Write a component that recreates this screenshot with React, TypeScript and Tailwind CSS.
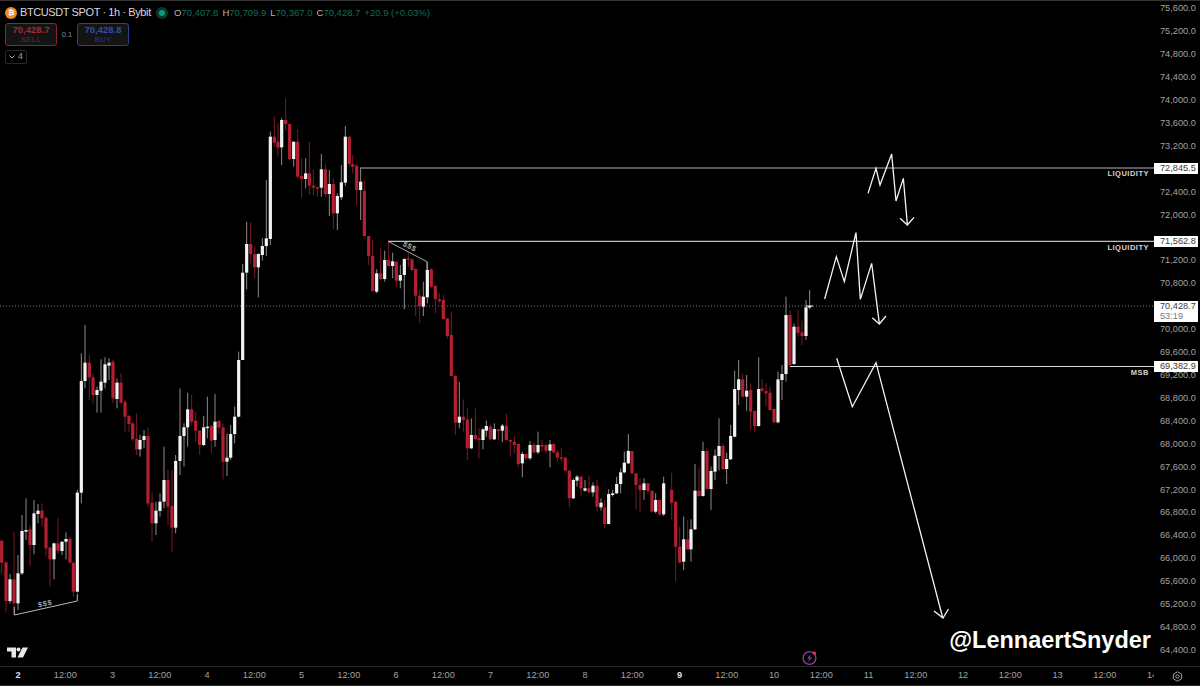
import React from "react";

type C = [number, number, number, number, number, number];

// [zoomX, wickTop, bodyTop, bodyBottom, wickBottom, isWhite]
const a: C[] = [
[5,660,662,728,760,0],[18,725,727,843,878,0],[30,762,778,843,850,1],[42,635,778,850,885,0],[54,705,760,850,870,1],[66,585,633,760,765,1],[78,535,630,635,660,1],[90,615,628,675,738,0],[102,540,580,675,703,1],[114,552,572,582,610,1],[126,550,572,595,620,0],[138,590,593,685,710,0],[150,680,683,718,798,0],[162,668,670,718,778,1],[174,595,670,692,700,0],[186,665,665,693,705,1],[198,637,657,665,718,1],[210,650,657,728,730,0],[220,725,728,815,830,0],[232,510,518,815,818,1],[244,100,183,518,550,1],[255,15,128,183,205,1],[268,105,128,172,240,0],[279,160,172,225,250,0],[291,200,210,225,278,1],[303,118,185,212,278,1],[315,112,133,188,205,1],[327,115,128,137,180,1],[339,120,125,235,250,0],[351,175,188,237,265,1],[363,160,188,248,250,0],[375,240,246,290,335,0],[387,285,288,312,335,0],[398,305,310,358,365,0],[410,280,356,388,405,0],[420,345,360,388,410,1],[432,330,348,360,385,1],[444,322,348,550,560,0],[456,518,548,610,665,0],[468,545,572,610,645,1],[480,520,545,573,590,1],[492,380,480,545,565,1],[504,450,480,560,615,0],[516,450,558,623,695,0],[527,405,423,623,640,1],[540,205,348,423,465,1],[552,310,322,348,440,1],[563,218,268,322,380,1],[575,225,268,305,315,0],[587,275,302,332,365,0],[599,330,332,375,405,0],[611,288,322,375,378,1],[622,230,320,324,355,1],[634,315,318,362,400,0],[645,222,305,360,380,1],[657,300,303,323,340,0],[669,310,322,425,478,0],[681,340,413,425,468,1],[692,315,342,413,420,1],[704,260,290,342,370,1],[716,95,120,290,292,1],
];
const b: C[] = [
[38,522,548,810,810,1],[50,395,462,548,598,1],[62,398,462,492,520,0],[74,470,492,532,565,0],[85,490,492,532,622,1],[97,445,468,495,512,1],[109,270,445,468,498,1],[121,125,140,447,465,1],[133,80,140,158,170,0],[144,100,155,173,200,0],[155,85,90,172,225,1],[167,25,90,102,120,0],[179,100,102,207,210,0],[191,155,155,207,230,1],[203,118,155,260,265,0],[215,205,258,267,322,0],[227,205,250,267,295,1],[238,155,250,287,315,0],[250,238,287,293,315,0],[262,290,292,294,320,0],[274,192,238,293,320,1],[286,222,238,312,320,0],[298,240,282,312,378,1],[310,265,282,370,418,0],[322,310,318,370,420,1],[334,225,277,322,330,1],[346,108,140,278,288,1],[358,140,140,222,230,0],[368,195,222,230,250,0],[380,222,228,300,345,0],[392,235,275,300,390,1],[403,270,302,438,440,0],[416,438,438,498,525,0],[428,450,498,603,605,0],[440,538,550,605,610,1],[452,475,550,567,570,0],[464,482,510,567,575,1],[476,455,510,528,530,0],[488,488,514,528,565,1],[499,515,515,572,590,0],[511,525,555,572,595,1],[523,505,507,555,658,1],[535,490,505,508,530,0],[546,505,508,540,545,0],[557,535,537,617,678,0],[569,600,617,648,700,0],[580,575,620,650,678,1],[592,515,540,622,640,1],[604,535,538,590,595,0],[616,585,588,627,670,0],[628,610,628,633,640,0],[640,615,630,687,690,0],[652,685,685,738,745,0],
];
const c: C[] = [
[64,95,165,288,290,0],[76,285,288,428,465,0],[88,305,410,428,445,1],[100,358,410,420,455,0],[112,385,418,505,540,0],[124,415,465,505,507,1],[136,385,465,477,480,0],[147,445,475,480,535,0],[159,445,448,480,508,1],[169,422,438,452,470,1],[181,435,440,478,480,0],[193,430,447,478,480,1],[205,447,448,453,480,0],[217,432,437,452,487,1],[229,402,437,480,482,0],[241,478,480,485,530,0],[253,468,485,495,520,0],[265,490,492,552,560,0],[277,515,522,550,592,1],[288,520,522,535,540,0],[300,483,495,535,540,1],[312,490,495,517,520,0],[324,455,495,517,522,1],[336,480,495,500,515,0],[348,490,495,512,520,0],[360,480,493,512,562,1],[371,490,492,517,520,0],[382,510,517,533,545,0],[394,505,532,534,545,0],[406,530,533,572,575,0],[418,570,572,655,682,0],[430,595,600,655,657,1],[441,585,590,602,620,1],[453,588,590,625,650,0],[465,600,625,632,635,1],[477,588,625,637,640,0],[489,607,617,637,650,1],[501,600,617,680,695,0],[513,655,668,682,692,1],[524,660,682,732,745,0],[536,628,642,732,733,1],[548,630,640,645,650,1],[560,590,612,640,642,1],[572,565,577,612,640,1],[583,515,548,577,580,1],[595,462,513,550,552,1],[606,513,513,580,582,0],[618,580,580,615,690,0],[630,595,615,630,698,0],[642,595,610,630,660,1],[654,610,610,633,640,0],[666,630,633,695,697,0],[677,640,660,695,700,1],[689,660,660,703,708,0],[701,590,610,703,708,1],
];
const d: C[] = [
[35,578,630,668,718,0],[47,665,665,800,905,0],[59,740,800,848,850,0],[71,710,778,845,870,1],[83,720,778,808,810,0],[93,718,748,808,845,1],[105,552,632,748,750,1],[117,562,632,648,650,0],[129,485,513,648,650,1],[141,505,513,627,628,0],[153,560,573,627,690,1],[165,508,527,575,600,1],[177,415,498,528,572,1],[189,490,498,567,570,0],[200,518,537,567,612,1],[212,435,468,538,540,1],[224,272,327,470,472,1],[236,240,298,330,375,1],[248,280,298,350,352,0],[260,285,332,350,392,1],[272,310,330,395,450,0],[284,392,393,438,455,0],[296,232,327,438,440,1],[306,298,325,333,335,0],[318,310,333,340,380,0],[330,320,338,390,392,0],[342,385,387,427,430,0],[354,275,298,427,430,1],[366,255,282,300,360,1],[378,50,105,282,305,1],[390,90,105,255,258,0],[402,130,140,252,255,1],[414,90,140,158,170,0],[426,122,157,168,195,0],[438,60,82,168,180,1],[449,30,78,82,88,1],
];

const toAbs = (arr: C[], ox: number, oy: number): C[] =>
  arr.map(([x, w1, b1, b2, w2, k]) => [ox + x / 3, oy + w1 / 3, oy + b1 / 3, oy + b2 / 3, oy + w2 / 3, k]);

const candles: C[] = [
  ...toAbs(a, 0, 320),
  ...toAbs(b, 230, 90),
  ...toAbs(c, 430, 280),
  ...toAbs(d, 660, 280),
];

const prices = [
  "75,600.0","75,200.0","74,800.0","74,400.0","74,000.0","73,600.0","73,200.0","72,800.0","72,400.0","72,000.0","71,600.0","71,200.0","70,800.0","70,400.0","70,000.0","69,600.0","69,200.0","68,800.0","68,400.0","68,000.0","67,600.0","67,200.0","66,800.0","66,400.0","66,000.0","65,600.0","65,200.0","64,800.0","64,400.0",
];

// the price rows that the live tags cover are left out of the axis
const hidden = new Set(["72,800.0", "71,600.0", "70,400.0"]);

const times = ["2","12:00","3","12:00","4","12:00","5","12:00","6","12:00","7","12:00","8","12:00","9","12:00","10","12:00","11","12:00","12","12:00","13","12:00","14"];

const pts = (l: number[][], ox: number, oy: number) => l.map(([x, y]) => `${ox + x / 3},${oy + y / 3}`).join(" ");

const Tag = ({ y, text, sub }: { y: string; text: string; sub?: string }) => (
  <div className={`absolute left-0 w-[43.5px] bg-white pl-[6px] text-[#3a3a3a] leading-[11px] ${y}`}>
    {text}
    {sub && <div className="text-[#777777] leading-[9px] pb-px">{sub}</div>}
  </div>
);

const Label = ({ y, text }: { y: string; text: string }) => (
  <div className={`absolute right-[5px] text-[7.5px] font-bold tracking-[0.5px] leading-[10px] text-[#d4d4d4] ${y}`}>{text}</div>
);

export default function App() {
  return (
    <div className="w-[1200px] h-[686px] bg-black flex flex-col overflow-hidden font-['Liberation_Sans',sans-serif]">
      <div className="h-px bg-[#333333] shrink-0" />
      <div className="flex flex-1 min-h-0">
        <div className="relative w-[1154px] shrink-0 overflow-hidden">
          <svg className="absolute inset-0" width="1154" height="665" viewBox="0 1 1154 665" fill="none">
            <line x1="0" y1="306" x2="1154" y2="306" stroke="#7a7a7a" strokeWidth="1" strokeDasharray="1 2" />
            {candles.map(([x, w1, b1, b2, w2, k], i) => (
              <g key={i}>
                <line x1={x} y1={w1} x2={x} y2={w2} stroke={k ? "#8c8c8c" : "#7c1a26"} strokeWidth="1" />
                <rect x={x - 1.6} y={b1} width="3.2" height={Math.max(b2 - b1, 1.5)} fill={k ? "#f2f2f2" : "#b41f31"} />
              </g>
            ))}
            <line x1="806" y1="306" x2="813" y2="306" stroke="#e8e8e8" />
            {/* horizontal levels */}
            <line x1="360" y1="168" x2="1154" y2="168" stroke="#b4b4b4" strokeWidth="1.2" />
            <line x1="388" y1="241.3" x2="1154" y2="241.3" stroke="#c0c0c0" strokeWidth="1.2" />
            <line x1="790" y1="366.5" x2="1154" y2="366.5" stroke="#dcdcdc" strokeWidth="1.2" />
            {/* $$$ trend lines */}
            <polyline points="14.3,607 14.3,615 77.3,601 77.3,594" stroke="#b8b8b8" strokeWidth="1" />
            <polyline points="388.7,241.7 427,261.7 427,270" stroke="#a8a8a8" strokeWidth="1" />
            <text x="45" y="606" textAnchor="middle" fontSize="7.5" fontWeight="700" fill="#a8a8a8" letterSpacing="0.6" transform="rotate(-12 45 603)">$$$</text>
            <text x="410" y="249" textAnchor="middle" fontSize="7.5" fontWeight="700" fill="#a8a8a8" letterSpacing="0.6" transform="rotate(27 410 246)">$$$</text>
            {/* projected paths */}
            <g stroke="#f4f4f4" strokeWidth="1.3" strokeLinejoin="miter">
              <polyline points={pts([[204,160],[228,85],[240,135],[275,42],[288,183],[310,115],[322,253]], 800, 140)} />
              <polyline points={pts([[300,235],[322,255],[342,232]], 800, 140)} />
              <polyline points={pts([[74,477],[109,350],[133,425],[168,278],[181,478],[215,370],[238,550]], 800, 140)} />
              <polyline points={pts([[217,533],[238,552],[258,528]], 800, 140)} />
              <polyline points="836.7,358.3 852.3,406.7 876,362.7 942.5,617" />
              <polyline points="934,611 943,618 948.5,609" />
            </g>
          </svg>

          {/* legend */}
          <div className="relative flex flex-col items-start pl-[5px] pt-[5px]">
            <div className="flex items-center h-[13px] text-[11px] tracking-[-0.4px] text-[#d9d9d9] leading-none whitespace-nowrap">
              <div className="w-[12px] h-[12px] rounded-full bg-[#f08a24] flex items-center justify-center text-white text-[8px] font-bold font-['DejaVu_Sans',sans-serif]">₿</div>
              <span className="ml-[3px] w-[136px]">BTCUSDT SPOT · 1h · Bybit</span>
              <div className="w-[12px] h-[12px] rounded-full bg-[#0b3a2d] flex items-center justify-center">
                <div className="w-[6px] h-[6px] rounded-full bg-[#119a78]" />
              </div>
              <div className="ml-[6px] flex gap-[4px] text-[9.5px] tracking-normal text-[#0f6f58]">
                <span><span className="text-[#b8b8b8]">O</span>70,407.8</span>
                <span><span className="text-[#b8b8b8]">H</span>70,709.9</span>
                <span><span className="text-[#b8b8b8]">L</span>70,367.0</span>
                <span><span className="text-[#b8b8b8]">C</span>70,428.7</span>
                <span>+20.9 (+0.03%)</span>
              </div>
            </div>
            <div className="flex items-center mt-[4px]">
              <div className="w-[52px] h-[23px] rounded-[3px] border border-[#8a2433] bg-[#141414] flex flex-col items-center justify-center leading-[10px]">
                <span className="text-[9.5px] font-bold text-[#a52a3a]">70,428.7</span>
                <span className="text-[7.5px] text-[#7a2030] tracking-[0.5px]">SELL</span>
              </div>
              <span className="w-[20px] text-center text-[7.5px] text-[#8c8c8c]">0.1</span>
              <div className="w-[52px] h-[23px] rounded-[3px] border border-[#26409a] bg-[#141414] flex flex-col items-center justify-center leading-[10px]">
                <span className="text-[9.5px] font-bold text-[#2f4fb0]">70,428.8</span>
                <span className="text-[7.5px] text-[#24398a] tracking-[0.5px]">BUY</span>
              </div>
            </div>
            <div className="mt-[4px] w-[22px] h-[14px] border border-[#2a2a2a] rounded-[2px] flex items-center justify-center gap-[3px] text-[9px] text-[#a0a0a0]">
              <svg width="6" height="4" viewBox="0 0 6 4" fill="none"><path d="M0.5 0.5 L3 3 L5.5 0.5" stroke="#b0b0b0" strokeWidth="1" /></svg>
              <span>4</span>
            </div>
          </div>

          <Label y="top-[168px]" text="LIQUIDITY" />
          <Label y="top-[242px]" text="LIQUIDITY" />
          <Label y="top-[367px]" text="MSB" />

          {/* watermark */}
          <div className="absolute right-[3px] top-[625px] text-[23.5px] leading-[28px] font-bold text-white">@LennaertSnyder</div>

          {/* lightning badge */}
          <div className="absolute left-[802px] top-[649px] w-[16px] h-[16px]">
            <svg width="16" height="16" viewBox="0 0 16 16" fill="none">
              <circle cx="7.5" cy="8" r="6.4" stroke="#93409f" strokeWidth="1.3" />
              <path d="M8.8 4 L5 8.6 H7.3 L6.2 12 L10 7.4 H7.7 Z" fill="#8a3fa6" />
              <circle cx="12.4" cy="3.2" r="1.6" fill="#f0354f" />
            </svg>
          </div>

          {/* TradingView logo */}
          <svg className="absolute left-[7px] top-[646px]" width="21" height="11" viewBox="0 0 21 11" fill="#e8e8e8">
            <path d="M0 0.5 H9 V10.5 H4.5 V4.5 H0 Z" />
            <circle cx="11.5" cy="2.5" r="2" />
            <path d="M15.5 0.5 H21 L16 10.5 H10.5 Z" />
          </svg>
        </div>

        {/* price axis */}
        <div className="relative w-[46px] shrink-0 overflow-hidden text-[9.2px] text-[#a3a3a3]">
          <div className="flex flex-col mt-[-3.8px] pl-[6px]">
            {prices.map((p, i) => (
              <div key={i} className="h-[22.93px] leading-[22.93px] whitespace-nowrap">{hidden.has(p) ? "" : p}</div>
            ))}
          </div>
          <Tag y="top-[162px]" text="72,845.5" />
          <Tag y="top-[235px]" text="71,562.8" />
          <Tag y="top-[300px]" text="70,428.7" sub="53:19" />
          <Tag y="top-[360px]" text="69,382.9" />
        </div>
      </div>

      {/* time axis */}
      <div className="relative h-[19px] shrink-0 border-t border-[#2a2a2a] flex overflow-hidden text-[9.2px] text-[#a3a3a3]">
        <div className="w-[1154px] shrink-0 overflow-hidden">
          <div className="flex ml-[-5.6px] w-[1250px] h-[18px] items-center">
            {times.map((t, i) => (
              <div key={i} className={`w-[47.25px] shrink-0 text-center ${t === "2" || t === "9" ? "text-[#e0e0e0] font-bold" : ""}`}>{t}</div>
            ))}
          </div>
        </div>
        <div className="flex-1 flex items-center justify-center">
          <svg width="11" height="11" viewBox="0 0 11 11" fill="none" stroke="#a0a0a0" strokeWidth="1">
            <path d="M5.5 0.8 L9.6 3.1 V7.9 L5.5 10.2 L1.4 7.9 V3.1 Z" />
            <circle cx="5.5" cy="5.5" r="1.7" />
          </svg>
        </div>
      </div>
      <div className="h-px bg-[#2a2a2a] shrink-0" />
    </div>
  );
}
